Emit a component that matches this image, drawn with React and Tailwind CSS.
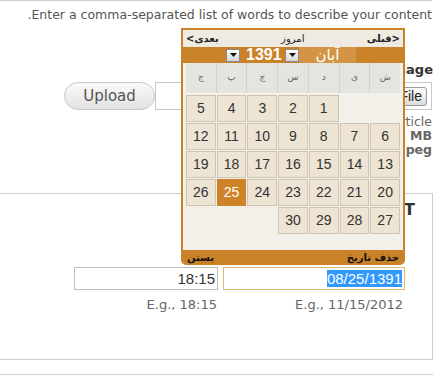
export default function App() {
  const rows = [
    [5, 4, 3, 2, 1, null, null],
    [12, 11, 10, 9, 8, 7, 6],
    [19, 18, 17, 16, 15, 14, 13],
    [26, 25, 24, 23, 22, 21, 20],
    [null, null, null, 30, 29, 28, 27],
  ];
  const dayNames = ["ج", "پ", "چ", "س", "د", "ی", "ش"];

  const Arrow = () => (
    <div className="w-[14px] h-[13px] border border-[#8a8a8a] bg-gradient-to-b from-[#ffffff] to-[#d6d6d6] flex items-center justify-center">
      <svg width="7" height="4" viewBox="0 0 7 4">
        <path d="M0 0 L7 0 L3.5 4 Z" fill="#111" />
      </svg>
    </div>
  );

  return (
    <div className="relative w-[442px] h-[380px] overflow-hidden bg-white font-['DejaVu_Sans',sans-serif] text-[#555]">
      {/* page flow */}
      <div className="w-[432px] border-t border-[#cfcfcf]" />
      <div className="w-[432px] pt-[5px] text-right text-[12.5px] leading-[18px] text-[#555]">
        .Enter a comma-separated list of words to describe your content
      </div>
      <div className="w-[433px] mt-[38px] text-right text-[13px] font-bold leading-[16px] text-[#333]">
        Image
      </div>
      <div className="w-[432px] mt-[4px] flex justify-end">
        <button className="w-[91px] h-[28px] rounded-full border border-[#c8c8c8] bg-gradient-to-b from-[#fafafa] to-[#e2e2e2] text-[15px] text-[#555] font-['DejaVu_Sans',sans-serif]">
          Upload
        </button>
        <div className="w-[277px] h-[28px] border border-[#c8c8c8] bg-white flex items-center justify-end pr-[4px]">
          <div className="h-[19px] px-[4px] border border-[#9a9a9a] rounded-[3px] bg-gradient-to-b from-[#fdfdfd] to-[#dcdcdc] text-[14px] leading-[17px] text-[#222] font-['Liberation_Sans',sans-serif]">
            Choose File
          </div>
        </div>
      </div>
      <div className="w-[432px] mt-[5px] text-right text-[12.5px] leading-[14px] text-[#666]">
        <div>Upload an image to go with this article</div>
        <div className="font-bold">Files must be less than 2 MB</div>
        <div className="font-bold">Allowed file types: png gif jpg jpeg</div>
      </div>

      <div className="mt-[36px] w-[433px] h-[167px] border-t border-r border-b border-[#cfcfcf]">
        <div className="pt-[7px] pr-[17px] text-right text-[16px] font-bold leading-[18px] text-[#333]">
          Date and time GMT
        </div>
        <div className="mt-[48px] flex justify-end gap-[5px] pr-[27px]">
          <div className="w-[144px] h-[23px] border border-[#bdbdbd] bg-white text-right pr-[2px] text-[15px] leading-[21px] text-[#333] font-['Liberation_Sans',sans-serif]">
            18:15
          </div>
          <div className="w-[182px] h-[23px] border border-[#e0ba72] bg-white flex justify-end items-center pr-[2px]">
            <span className="bg-[#3399ff] text-white text-[15px] leading-[17px] font-['Liberation_Sans',sans-serif]">
              08/25/1391
            </span>
          </div>
        </div>
        <div className="mt-[6px] flex justify-end gap-[5px] pr-[29px] text-[13px] leading-[17px] text-[#666]">
          <div className="w-[144px] text-right pr-[1px]">E.g., 18:15</div>
          <div className="w-[180px] text-right">E.g., 11/15/2012</div>
        </div>
      </div>
      <div className="mt-[14px] w-[433px] border-t border-[#cfcfcf]" />

      {/* calendar popup overlay */}
      <div className="absolute left-[181px] top-[28px] w-[224px] h-[237px] border-x-2 border-t-2 border-[#c98228] rounded-b-[5px] overflow-hidden bg-[#f3f0ea] flex flex-col">
        <div className="h-[17px] bg-[#efebe3] flex items-center justify-between px-[3px] text-[10px] font-bold text-[#222] font-['DejaVu_Sans',sans-serif]">
          <div className="flex items-center">
            <span>&lt;</span>
            <span>بعدی</span>
          </div>
          <span className="font-normal">امروز</span>
          <div className="flex items-center">
            <span>قبلی</span>
            <span>&gt;</span>
          </div>
        </div>
        <div className="h-[16px] bg-[#c98228] flex items-center pl-[43px]">
          <Arrow />
          <span className="ml-[6px] w-[36px] text-white text-[16px] font-bold leading-[16px] font-['Liberation_Sans',sans-serif]">
            1391
          </span>
          <div className="ml-[3px]">
            <Arrow />
          </div>
          <div className="w-[57px] h-[16px] bg-[#d39445] flex items-center justify-center text-white text-[15px] leading-[16px] font-['DejaVu_Sans',sans-serif]">
            آبان
          </div>
        </div>
        <div className="px-[3px]">
          <div className="h-[30px] grid grid-cols-7 gap-px bg-[#d2d2cc]">
            {dayNames.map((d) => (
              <div
                key={d}
                className="bg-[#e5e5e0] flex items-center justify-center text-[9px] text-[#666] font-['DejaVu_Sans',sans-serif]"
              >
                {d}
              </div>
            ))}
          </div>
          <div className="mt-[2px] grid grid-cols-7 gap-px">
            {rows.flat().map((n, i) =>
              n === null ? (
                <div key={i} className="h-[27px]" />
              ) : n === 25 ? (
                <div
                  key={i}
                  className="h-[27px] bg-[#cf8328] flex items-center justify-center text-[14px] text-white font-['Liberation_Sans',sans-serif]"
                >
                  {n}
                </div>
              ) : (
                <div
                  key={i}
                  className="h-[27px] bg-[#ede4d4] border border-[#cfc4b1] flex items-center justify-center text-[14px] text-[#333] font-['Liberation_Sans',sans-serif]"
                >
                  {n}
                </div>
              )
            )}
          </div>
        </div>
        <div className="flex-1" />
        <div className="h-[15px] bg-[#c98228] flex items-center justify-between px-[4px] text-[10px] font-bold text-[#111] font-['DejaVu_Sans',sans-serif]">
          <span>بستن</span>
          <span>حذف تاریخ</span>
        </div>
      </div>
    </div>
  );
}
